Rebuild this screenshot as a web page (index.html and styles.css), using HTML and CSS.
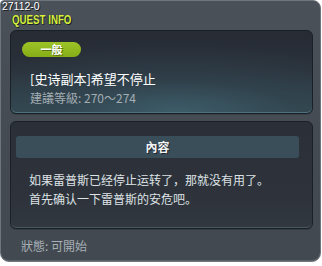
FILE: index.html
```html
<!DOCTYPE html>
<html>
<head>
<meta charset="utf-8">
<link rel="stylesheet" href="styles.css">
</head>
<body>
<div class="window">
  <div class="head">
    <div class="qid">27112-0</div>
    <div class="qtitle">QUEST INFO</div>
  </div>
  <div class="card quest">
    <div class="badge">一般</div>
    <div class="qname">[史诗副本]希望不停止</div>
    <div class="qlevel">建議等級: 270～274</div>
  </div>
  <div class="card content">
    <div class="bar">內容</div>
    <div class="desc">
      <div>如果雷普斯已经停止运转了，那就没有用了。</div>
      <div>首先确认一下雷普斯的安危吧。</div>
    </div>
  </div>
  <div class="status">狀態: 可開始</div>
</div>
</body>
</html>
```
FILE: styles.css
```css
html, body {
  margin: 0;
  padding: 0;
  background: #ffffff;
}
body {
  width: 322px;
  height: 266px;
  font-family: "Noto Sans CJK SC", "Noto Sans CJK TC", sans-serif;
}
.window {
  box-sizing: border-box;
  width: 321px;
  height: 262px;
  background: linear-gradient(#4a5159, #434a52 60%, #424950);
  border: 1px solid #6f757c;
  border-radius: 4px 8px 9px 9px;
  display: flex;
  flex-direction: column;
  padding: 0 0 0 9px;
  box-shadow: inset 0 -1px 0 #5a6168;
}
.head {
  height: 29px;
  margin-left: -9px;
  display: flex;
  flex-direction: column;
  align-items: flex-start;
}
.qid {
  margin: -1px 0 0 1px;
  font-family: "Liberation Sans", sans-serif;
  font-size: 11px;
  color: #ffffff;
  text-shadow: 1px 1px 0 #1a1d20;
  line-height: 13px;
  height: 13px;
  transform: scaleX(0.95);
  transform-origin: left top;
}
.qtitle {
  margin: 0 0 0 11px;
  font-family: "Liberation Sans", sans-serif;
  font-weight: bold;
  font-size: 12px;
  color: #d6ee3c;
  text-shadow: 1px 1px 0 #1c2126, -1px 0 0 #2a3036;
  line-height: 14px;
  transform: scaleX(0.81);
  transform-origin: left top;
}
.card {
  box-sizing: border-box;
  width: 303px;
  border: 1px solid #1b2026;
  border-radius: 6px;
}
.quest {
  height: 84px;
  background:
    radial-gradient(ellipse 260px 70px at 55% 100%, #3d5c69 0%, rgba(50,72,84,0.6) 45%, rgba(38,44,53,0) 100%),
    linear-gradient(#262b34, #2a3039 50%, #34484f);
  box-shadow: inset 0 -1px 0 #4f7280, 0 1px 0 #3a4047;
  padding: 11px 0 0 11px;
  display: flex;
  flex-direction: column;
}
.badge {
  width: 59px;
  height: 15px;
  border-radius: 8px;
  background: linear-gradient(#9cc427, #87ad17);
  color: #ffffff;
  font-size: 11px;
  font-weight: bold;
  text-align: center;
  line-height: 15px;
  text-shadow: 1px 1px 0 #5a7410;
}
.qname {
  margin: 14px 0 0 8px;
  font-size: 13px;
  line-height: 16px;
  color: #ffffff;
}
.qlevel {
  margin: 3px 0 0 8px;
  font-size: 12px;
  line-height: 15px;
  color: #a4adb3;
}
.content {
  margin-top: 7px;
  height: 108px;
  background: linear-gradient(#2b3038, #2e333b 70%, #323840);
  box-shadow: inset 0 -1px 0 #485860, 0 1px 0 #353b42;
  padding: 14px 13px 0 5px;
  display: flex;
  flex-direction: column;
}
.bar {
  height: 22px;
  border-radius: 3px;
  background: #3a4e5a;
  color: #f2f4f5;
  font-size: 12px;
  font-weight: bold;
  text-align: center;
  line-height: 22px;
  text-shadow: 1px 1px 0 #1c2328;
}
.desc {
  margin: 12px 0 0 13px;
  font-size: 12px;
  line-height: 19px;
  color: #dde2e5;
}
.status {
  margin: 9px 0 0 11px;
  font-size: 12px;
  line-height: 16px;
  color: #a7b0b6;
}
```
